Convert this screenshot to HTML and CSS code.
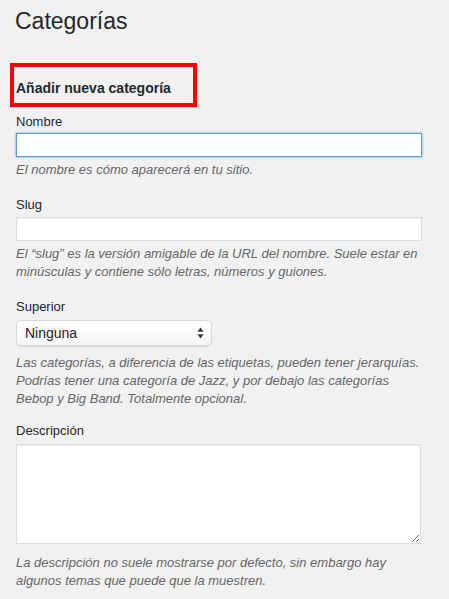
FILE: index.html
```html
<!DOCTYPE html>
<html lang="es">
<head>
<meta charset="utf-8">
<title>Categorías</title>
<link rel="stylesheet" href="styles.css">
</head>
<body>
<div class="wrap">
  <h1 class="title">Categorías</h1>
  <div class="highlight"><h2 class="subtitle">Añadir nueva categoría</h2></div>
  <form class="form">
    <div class="field field-name">
      <label class="label" for="tag-name">Nombre</label>
      <input class="input input-focus" id="tag-name" type="text">
      <p class="desc">El nombre es cómo aparecerá en tu sitio.</p>
    </div>
    <div class="field field-slug">
      <label class="label" for="tag-slug">Slug</label>
      <input class="input" id="tag-slug" type="text">
      <p class="desc">El “slug” es la versión amigable de la URL del nombre. Suele estar en<br>minúsculas y contiene sólo letras, números y guiones.</p>
    </div>
    <div class="field field-parent">
      <label class="label" for="parent">Superior</label>
      <div class="select-wrap">
        <select class="select" id="parent"><option>Ninguna</option></select>
        <svg class="select-arrows" width="7" height="12" viewBox="0 0 7 12" aria-hidden="true">
          <path d="M3.5 0.5 L6.5 4.8 L0.5 4.8 Z" fill="#333"/>
          <path d="M3.5 11.5 L6.5 7.2 L0.5 7.2 Z" fill="#333"/>
        </svg>
      </div>
      <p class="desc">Las categorías, a diferencia de las etiquetas, pueden tener jerarquías.<br>Podrías tener una categoría de Jazz, y por debajo las categorías<br>Bebop y Big Band. Totalmente opcional.</p>
    </div>
    <div class="field field-description">
      <label class="label" for="tag-description">Descripción</label>
      <textarea class="textarea" id="tag-description"></textarea>
      <p class="desc">La descripción no suele mostrarse por defecto, sin embargo hay<br>algunos temas que puede que la muestren.</p>
    </div>
  </form>
</div>
</body>
</html>
```

FILE: styles.css
```css
html, body {
  margin: 0;
  padding: 0;
  background: #f1f1f1;
}
body {
  font-family: "Liberation Sans", Arial, Helvetica, sans-serif;
  font-size: 13px;
  color: #23282d;
}
.wrap {
  padding: 6px 0 0 16px;
}
.title {
  margin: 0 0 0 -1px;
  font-size: 23px;
  font-weight: 400;
  line-height: 30px;
  color: #23282d;
}
.highlight {
  box-sizing: border-box;
  width: 187px;
  margin: 27px 0 0 -6px;
  border: 4px solid #ff0000;
  padding: 12px 0 6px 2px;
}
.subtitle {
  margin: 0;
  font-size: 14px;
  font-weight: 700;
  line-height: 18px;
  color: #23282d;
}
.form {
  margin: 0;
}
.field {
  display: flex;
  flex-direction: column;
  align-items: flex-start;
}
.label {
  display: block;
  line-height: 18px;
  color: #23282d;
}
.field-name { margin-top: 6px; }
.field-slug { margin-top: 17px; }
.field-parent { margin-top: 17px; }
.field-description { margin-top: 14px; }

.input {
  box-sizing: border-box;
  width: 406px;
  height: 24px;
  margin: 2px 0 0;
  padding: 3px 5px;
  border: 1px solid #dddddd;
  background: #ffffff;
  box-shadow: inset 0 1px 2px rgba(0,0,0,0.07);
  font: inherit;
  outline: none;
}
.input-focus {
  border-color: #5b9dd9;
  box-shadow: 0 0 2px rgba(30,140,190,0.8);
}
.field-slug .input { margin-top: 3px; }

.desc {
  margin: 4px 0 0;
  font-style: italic;
  line-height: 18px;
  color: #666666;
  white-space: nowrap;
}

.select-wrap {
  display: inline-grid;
  margin-top: 4px;
}
.select {
  grid-area: 1 / 1;
  appearance: none;
  -webkit-appearance: none;
  box-sizing: border-box;
  width: 196px;
  height: 26px;
  margin: 0;
  padding: 0 20px 0 8px;
  border: 1px solid #d9d9d9;
  border-radius: 5px;
  background: linear-gradient(#ffffff, #f5f5f5);
  box-shadow: 0 1px 1px rgba(0,0,0,0.12);
  font-family: "Liberation Sans", Arial, Helvetica, sans-serif;
  font-size: 14px;
  color: #222222;
  outline: none;
}
.select-arrows {
  grid-area: 1 / 1;
  justify-self: end;
  align-self: center;
  margin-right: 8px;
  pointer-events: none;
}
.field-parent .desc { margin-top: 8px; }

.textarea {
  box-sizing: border-box;
  width: 405px;
  height: 100px;
  margin: 4px 0 0;
  padding: 2px 6px;
  border: 1px solid #dddddd;
  background: #ffffff;
  box-shadow: inset 0 1px 2px rgba(0,0,0,0.07);
  font: inherit;
  outline: none;
}
.field-description .desc { margin-top: 10px; }
```
